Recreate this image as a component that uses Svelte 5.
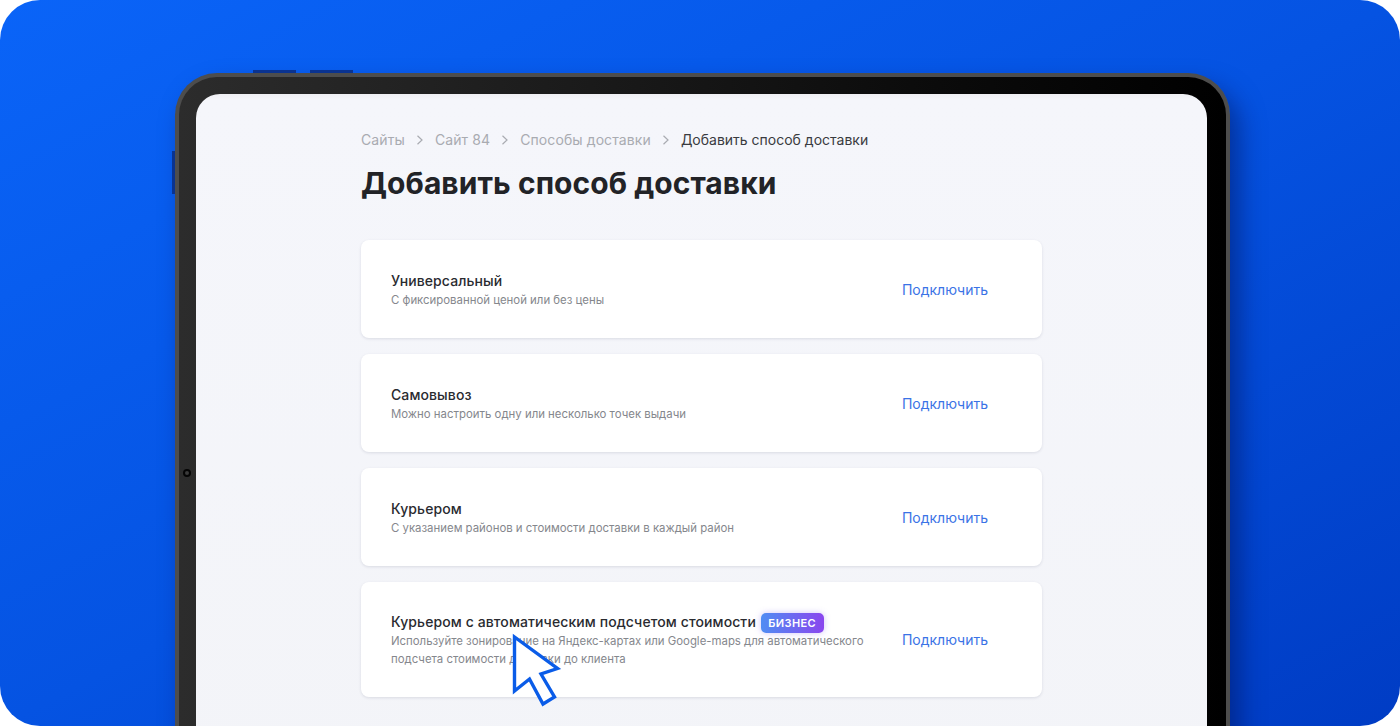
<script>
	const methods = [
		{ title: 'Универсальный', text: 'С фиксированной ценой или без цены' },
		{ title: 'Самовывоз', text: 'Можно настроить одну или несколько точек выдачи' },
		{ title: 'Курьером', text: 'С указанием районов и стоимости доставки в каждый район' },
		{
			title: 'Курьером с автоматическим подсчетом стоимости',
			text: 'Используйте зонирование на Яндекс-картах или Google-maps для автоматического подсчета стоимости доставки до клиента',
			badge: 'БИЗНЕС'
		}
	];

	const crumbs = ['Сайты', 'Сайт 84', 'Способы доставки'];
</script>

<div class="stage">
	<div class="tablet">
		<span class="key key-top-a"></span>
		<span class="key key-top-b"></span>
		<span class="key key-side"></span>
		<span class="camera"></span>

		<div class="screen">
			<div class="content">
				<nav class="crumbs">
					{#each crumbs as crumb}
						<span class="crumb">{crumb}</span>
						<svg class="sep" width="8" height="10" viewBox="0 0 8 10" fill="none">
							<path d="M1.5 0.8 L6 5 L1.5 9.2" stroke="#a9abb1" stroke-width="1.2" />
						</svg>
					{/each}
					<span class="crumb current">Добавить способ доставки</span>
				</nav>

				<h1>Добавить способ доставки</h1>

				<div class="list">
					{#each methods as method}
						<div class="card">
							<div class="info">
								<div class="title">
									{method.title}
									{#if method.badge}
										<span class="badge">{method.badge}</span>
									{/if}
								</div>
								<p>{method.text}</p>
							</div>
							<a href="#connect" class="connect">Подключить</a>
						</div>
					{/each}
				</div>
			</div>
		</div>
	</div>

	<svg class="cursor" width="52" height="78" viewBox="0 0 52 78" fill="none">
		<path
			d="M3.5 6 L3.5 60 L18.5 48 L32 73 L43.5 66 L30 43 L46.5 37.5 Z"
			fill="#fff"
			stroke="#0a5ce8"
			stroke-width="3.4"
		/>
	</svg>
</div>

<style>
	:global(body) {
		background: #fff;
	}

	.stage {
		position: relative;
		height: 726px;
		padding: 73px 170px 0 175px;
		box-sizing: border-box;
		overflow: hidden;
		border-radius: 40px;
		background: linear-gradient(to bottom right, #0a64f8 0%, #0553e2 50%, #003cc4 100%);
		font-family: Inter, 'Liberation Sans', sans-serif;
	}

	.tablet {
		position: relative;
		height: 720px;
		padding: 17px 19px 0 17px;
		border: 4px solid #4d4d4d;
		border-bottom: 0;
		border-radius: 42px 42px 0 0;
		background: linear-gradient(90deg, #2c2c2c 0%, #0c0c0c 70%, #000 100%);
		box-shadow: 10px 14px 24px rgba(0, 20, 90, 0.5);
	}

	.key {
		position: absolute;
		background: #0a3390;
	}

	.key-top-a,
	.key-top-b {
		top: -7px;
		width: 43px;
		height: 3px;
	}

	.key-top-a {
		left: 74px;
	}

	.key-top-b {
		left: 131px;
	}

	.key-side {
		left: -7px;
		top: 74px;
		width: 3px;
		height: 43px;
	}

	.camera {
		position: absolute;
		left: 4px;
		top: 392px;
		width: 8px;
		height: 8px;
		box-sizing: border-box;
		border: 2px solid #050505;
		border-radius: 50%;
		background: #3a3a3a;
	}

	.screen {
		height: 100%;
		box-sizing: border-box;
		padding: 36px 165px 0 165px;
		border-radius: 24px 24px 0 0;
		background: linear-gradient(180deg, #efeff3 0%, #f5f6fb 6px, #f3f4f8 100%);
	}

	.crumbs {
		display: flex;
		align-items: center;
		height: 20px;
		font-size: 14px;
		line-height: 20px;
		letter-spacing: 0.1px;
	}

	.crumb {
		color: #a9abb1;
	}

	.current {
		color: #3a3b40;
		letter-spacing: 0;
	}

	.sep {
		margin: 0 11px;
	}

	h1 {
		margin: 11px 0 35px;
		font-size: 30px;
		line-height: 44px;
		font-weight: 700;
		letter-spacing: 0.05px;
		color: #222327;
	}

	.list {
		display: flex;
		flex-direction: column;
		gap: 16px;
	}

	.card {
		display: flex;
		align-items: center;
		justify-content: space-between;
		min-height: 98px;
		box-sizing: border-box;
		padding: 30px 54px 29px 30px;
		border-radius: 8px;
		background: #fff;
		box-shadow: 0 1px 3px rgba(30, 40, 70, 0.12);
	}

	.info {
		width: 480px;
	}

	.title {
		font-size: 14px;
		line-height: 20px;
		font-weight: 500;
		letter-spacing: 0.1px;
		color: #2a2b30;
	}

	.badge {
		display: inline-block;
		margin-left: 1px;
		padding: 0 7.5px;
		border-radius: 5px;
		background: linear-gradient(90deg, #4f8df3 0%, #8a46ee 100%);
		box-shadow: 0 0 6px rgba(120, 90, 240, 0.35);
		font-size: 11px;
		line-height: 20px;
		font-weight: 600;
		letter-spacing: 0.4px;
		color: #fff;
		vertical-align: top;
		transform: translateY(1px);
	}

	p {
		margin: 0;
		font-size: 11.4px;
		line-height: 18px;
		color: #85878d;
	}

	.connect {
		font-size: 14px;
		line-height: 20px;
		color: #3b73e6;
		text-decoration: none;
	}

	.cursor {
		position: absolute;
		left: 511px;
		top: 631px;
	}
</style>
